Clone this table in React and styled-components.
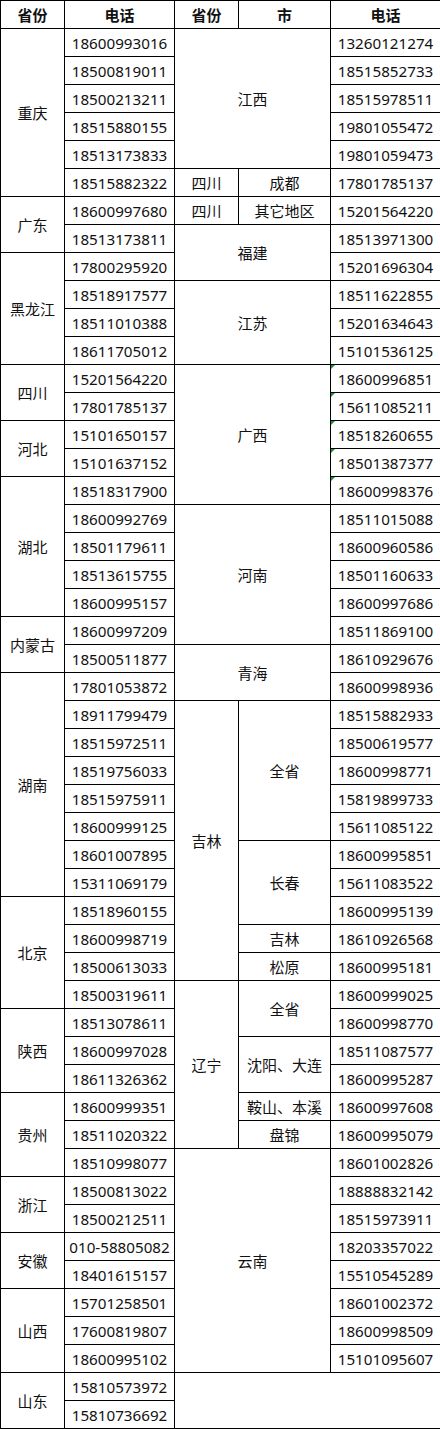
import React from 'react';
import styled, { createGlobalStyle } from 'styled-components';

const Global = createGlobalStyle`
  html, body { margin: 0; padding: 0; background: #fff; }
  body { font-family: 'Noto Sans', 'Noto Sans CJK SC', sans-serif; color: #000; }
`;

const Table = styled.table`
  width: 440px;
  table-layout: fixed;
  border-collapse: collapse;
  font-family: 'Noto Sans', 'Noto Sans CJK SC', sans-serif;
  font-size: 15px;
  color: #111;
`;

const Row = styled.tr`
  height: 28px;
`;

const HeadCell = styled.th`
  border: 1px solid #000;
  padding: 0;
  font-weight: 700;
  font-size: 15px;
  text-align: center;
  vertical-align: middle;
  white-space: nowrap;
`;

const Cell = styled.td`
  position: relative;
  border: 1px solid #000;
  padding: 0;
  text-align: center;
  vertical-align: middle;
  white-space: nowrap;
  line-height: 20px;
  font-size: ${(p) => (p.$num ? '15.2px' : '15px')};
  &::before {
    content: '';
    display: ${(p) => (p.$flag ? 'block' : 'none')};
    position: absolute;
    left: 0;
    top: 0;
    width: 0;
    height: 0;
    border-top: 4px solid #1f8a3a;
    border-right: 4px solid transparent;
  }
`;

const leftGroups = [
  ['重庆', ['18600993016', '18500819011', '18500213211', '18515880155', '18513173833', '18515882322']],
  ['广东', ['18600997680', '18513173811']],
  ['黑龙江', ['17800295920', '18518917577', '18511010388', '18611705012']],
  ['四川', ['15201564220', '17801785137']],
  ['河北', ['15101650157', '15101637152']],
  ['湖北', ['18518317900', '18600992769', '18501179611', '18513615755', '18600995157']],
  ['内蒙古', ['18600997209', '18500511877']],
  ['湖南', ['17801053872', '18911799479', '18515972511', '18519756033', '18515975911', '18600999125', '18601007895', '15311069179']],
  ['北京', ['18518960155', '18600998719', '18500613033', '18500319611']],
  ['陕西', ['18513078611', '18600997028', '18611326362']],
  ['贵州', ['18600999351', '18511020322', '18510998077']],
  ['浙江', ['18500813022', '18500212511']],
  ['安徽', ['010-58805082', '18401615157']],
  ['山西', ['15701258501', '17600819807', '18600995102']],
  ['山东', ['15810573972', '15810736692']],
];

const rightPhones = [
  '13260121274', '18515852733', '18515978511', '19801055472', '19801059473',
  '17801785137', '15201564220', '18513971300', '15201696304', '18511622855',
  '15201634643', '15101536125', '18600996851', '15611085211', '18518260655',
  '18501387377', '18600998376', '18511015088', '18600960586', '18501160633',
  '18600997686', '18511869100', '18610929676', '18600998936', '18515882933',
  '18500619577', '18600998771', '15819899733', '15611085122', '18600995851',
  '15611083522', '18600995139', '18610926568', '18600995181', '18600999025',
  '18600998770', '18511087577', '18600995287', '18600997608', '18600995079',
  '18601002826', '18888832142', '18515973911', '18203357022', '15510545289',
  '18601002372', '18600998509', '15101095607',
];

const flagged = new Set([13, 14, 15, 16, 17]);

const rightCells = {
  1: [{ t: '江西', cs: 2, rs: 5 }],
  6: [{ t: '四川' }, { t: '成都' }],
  7: [{ t: '四川' }, { t: '其它地区' }],
  8: [{ t: '福建', cs: 2, rs: 2 }],
  10: [{ t: '江苏', cs: 2, rs: 3 }],
  13: [{ t: '广西', cs: 2, rs: 5 }],
  18: [{ t: '河南', cs: 2, rs: 5 }],
  23: [{ t: '青海', cs: 2, rs: 2 }],
  25: [{ t: '吉林', rs: 10 }, { t: '全省', rs: 5 }],
  30: [{ t: '长春', rs: 3 }],
  33: [{ t: '吉林' }],
  34: [{ t: '松原' }],
  35: [{ t: '辽宁', rs: 6 }, { t: '全省', rs: 2 }],
  37: [{ t: '沈阳、大连', rs: 2 }],
  39: [{ t: '鞍山、本溪' }],
  40: [{ t: '盘锦' }],
  41: [{ t: '云南', cs: 2, rs: 8 }],
  49: [{ t: '', cs: 3, rs: 2 }],
};

function buildRows() {
  const rows = [];
  let r = 1;
  leftGroups.forEach(([prov, phones]) => {
    phones.forEach((ph, i) => {
      rows.push({ r, prov: i === 0 ? prov : null, span: phones.length, phone: ph });
      r += 1;
    });
  });
  return rows;
}

export default function App() {
  const rows = buildRows();
  return (
    <>
      <Global />
      <Table>
        <colgroup>
          <col style={{ width: 64 }} />
          <col style={{ width: 110 }} />
          <col style={{ width: 64 }} />
          <col style={{ width: 92 }} />
          <col style={{ width: 110 }} />
        </colgroup>
        <thead>
          <Row>
            <HeadCell>省份</HeadCell>
            <HeadCell>电话</HeadCell>
            <HeadCell>省份</HeadCell>
            <HeadCell>市</HeadCell>
            <HeadCell>电话</HeadCell>
          </Row>
        </thead>
        <tbody>
          {rows.map((row) => (
            <Row key={row.r}>
              {row.prov && <Cell rowSpan={row.span}>{row.prov}</Cell>}
              <Cell $num>{row.phone}</Cell>
              {(rightCells[row.r] || []).map((c, i) => (
                <Cell key={i} colSpan={c.cs || 1} rowSpan={c.rs || 1}>
                  {c.t}
                </Cell>
              ))}
              {row.r <= rightPhones.length && (
                <Cell $num $flag={flagged.has(row.r)}>
                  {rightPhones[row.r - 1]}
                </Cell>
              )}
            </Row>
          ))}
        </tbody>
      </Table>
    </>
  );
}
